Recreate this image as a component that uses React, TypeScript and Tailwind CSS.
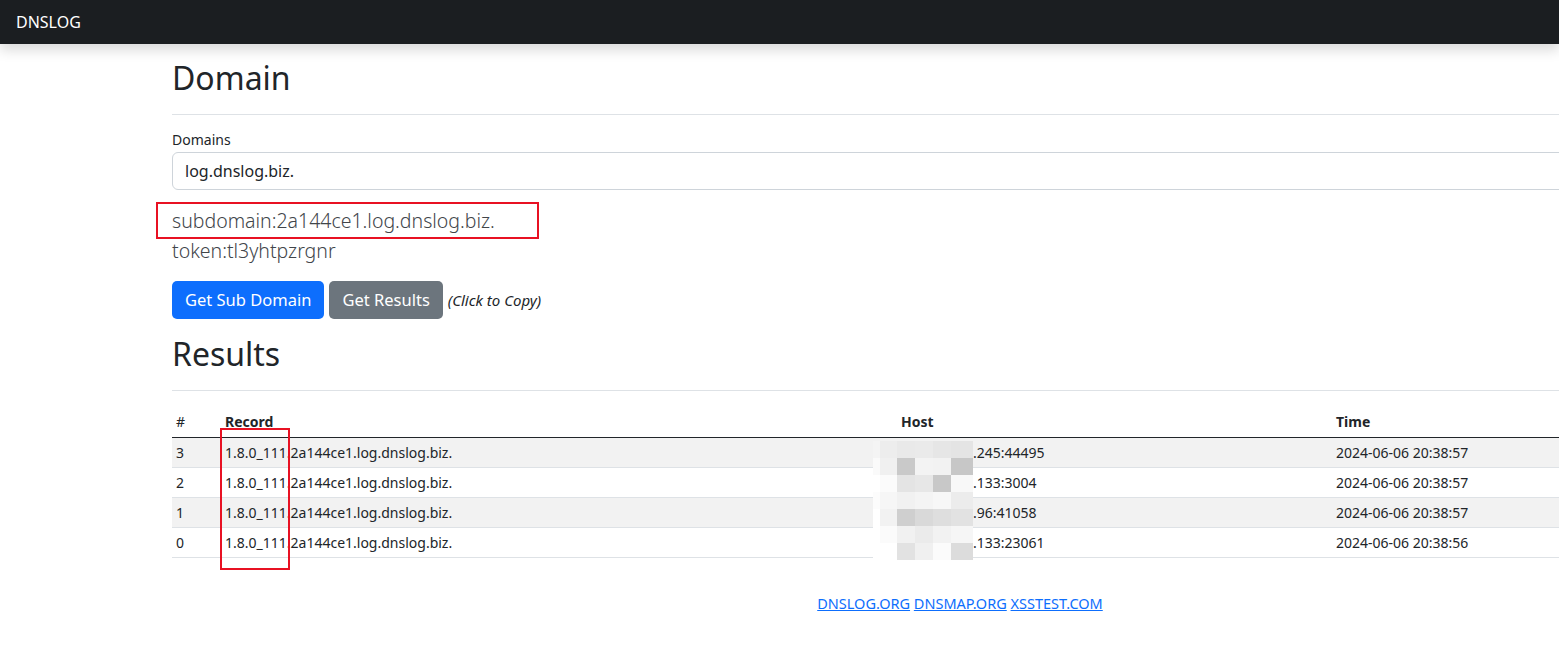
import React from 'react'

const rows = [
  { id: 3, host: '.245:44495', time: '2024-06-06 20:38:57' },
  { id: 2, host: '.133:3004', time: '2024-06-06 20:38:57' },
  { id: 1, host: '.96:41058', time: '2024-06-06 20:38:57' },
  { id: 0, host: '.133:23061', time: '2024-06-06 20:38:56' },
]

// mosaic over the hidden IP prefix
const mosaic = [
  ['#f4f4f4', '#ededed', '#e9e9e9', '#eaeaea', '#e6e6e6', '#e4e4e4'],
  ['#fafafa', '#f0f0f0', '#c9c9c9', '#f3f3f3', '#f2f2f2', '#c7c7c7'],
  ['#ffffff', '#fbfbfb', '#e4e4e4', '#e7e7e7', '#c8c8c8', '#f8f8f8'],
  ['#fcfcfc', '#f6f6f6', '#f1f1f1', '#f4f4f4', '#f7f7f7', '#ececec'],
  ['#ffffff', '#f2f2f2', '#cfcfcf', '#d9d9d9', '#dedede', '#e2e2e2'],
  ['#ffffff', '#fbfbfb', '#f1f1f1', '#ebebeb', '#f2f2f2', '#f6f6f6'],
  ['#ffffff', '#ffffff', '#e2e2e2', '#f0f0f0', '#fbfbfb', '#dcdcdc'],
]
const colW = [7, 17, 18, 18, 18, 22]

function Mosaic() {
  let x = 0
  const xs = colW.map((w) => {
    const v = x
    x += w
    return v
  })
  return (
    <svg width="100" height="120" className="absolute left-[873px] top-[441px]">
      {mosaic.map((r, ri) =>
        r.map((c, ci) => (
          <rect key={`${ri}-${ci}`} x={xs[ci]} y={ri * 17} width={colW[ci]} height={17} fill={c} />
        ))
      )}
    </svg>
  )
}

export default function App() {
  return (
    <div className="relative min-h-[651px] w-[1559px] overflow-hidden bg-white text-[#212529] font-['Noto_Sans','Liberation_Sans',sans-serif]">
      <nav className="relative z-10 flex h-[44px] items-center bg-[#1b1e21] px-4 shadow-[0_6px_12px_rgba(0,0,0,0.15)]">
        <span className="text-[16px] text-white">DNSLOG</span>
      </nav>

      <div className="ml-[172px] w-[1576px]">
        <h2 className="mt-[15px] border-b border-[#dee2e6] pb-[17px] text-[32px] leading-[38px]">Domain</h2>

        <label className="mt-[13px] block text-[14px] leading-[24px]">Domains</label>
        <div className="flex h-[38px] items-center rounded-[6px] border border-[#ced4da] px-3 text-[16px]">
          log.dnslog.biz.
        </div>

        <p className="mt-[16px] text-[19.5px] font-light leading-[30px] text-[#41454a]">subdomain:2a144ce1.log.dnslog.biz.</p>
        <p className="text-[19.5px] font-light leading-[30px] text-[#41454a]">token:tl3yhtpzrgnr</p>

        <div className="mt-[15px] flex items-center gap-[5px]">
          <button className="h-[38px] rounded-[5px] bg-[#0d6efd] px-[13px] text-[16.5px] text-white">Get Sub Domain</button>
          <button className="h-[38px] rounded-[5px] bg-[#6c757d] px-[13px] text-[16.5px] text-white">Get Results</button>
          <i className="text-[15px]">(Click to Copy)</i>
        </div>

        <h2 className="mt-[16px] border-b border-[#dee2e6] pb-[17px] text-[32px] leading-[38px]">Results</h2>

        <table className="mt-[15px] w-full border-collapse text-[14px]">
          <thead>
            <tr className="border-b border-[#212529] text-left">
              <th className="w-[49px] px-1 py-[3px] pt-[4px] font-normal leading-[24px]">#</th>
              <th className="w-[676px] px-1 py-[3px] pt-[4px] font-bold leading-[24px]">Record</th>
              <th className="w-[435px] px-1 py-[3px] pt-[4px] font-bold leading-[24px]">Host</th>
              <th className="px-1 py-[3px] pt-[4px] font-bold leading-[24px]">Time</th>
            </tr>
          </thead>
          <tbody>
            {rows.map((r, i) => (
              <tr key={r.id} className={`border-b border-[#dee2e6] ${i % 2 === 0 ? 'bg-[#f2f2f2]' : 'bg-white'}`}>
                <td className="h-[30px] px-1 leading-[20px]">{r.id}</td>
                <td className="px-1 leading-[20px]">1.8.0_111.2a144ce1.log.dnslog.biz.</td>
                <td className="px-1 leading-[20px]">
                  <span className="pl-[72px]">{r.host}</span>
                </td>
                <td className="px-1 leading-[20px]">{r.time}</td>
              </tr>
            ))}
          </tbody>
        </table>

        <div className="mt-[35px] text-center text-[14.5px]">
          <a className="text-[#0d6efd] underline" href="#">DNSLOG.ORG</a>{' '}
          <a className="text-[#0d6efd] underline" href="#">DNSMAP.ORG</a>{' '}
          <a className="text-[#0d6efd] underline" href="#">XSSTEST.COM</a>
        </div>
      </div>

      <Mosaic />
      <div className="pointer-events-none absolute left-[156px] top-[202px] h-[37px] w-[383px] border-2 border-[#e81123]" />
      <div className="pointer-events-none absolute left-[220px] top-[428px] h-[142px] w-[70px] border-2 border-[#e81123]" />
    </div>
  )
}
